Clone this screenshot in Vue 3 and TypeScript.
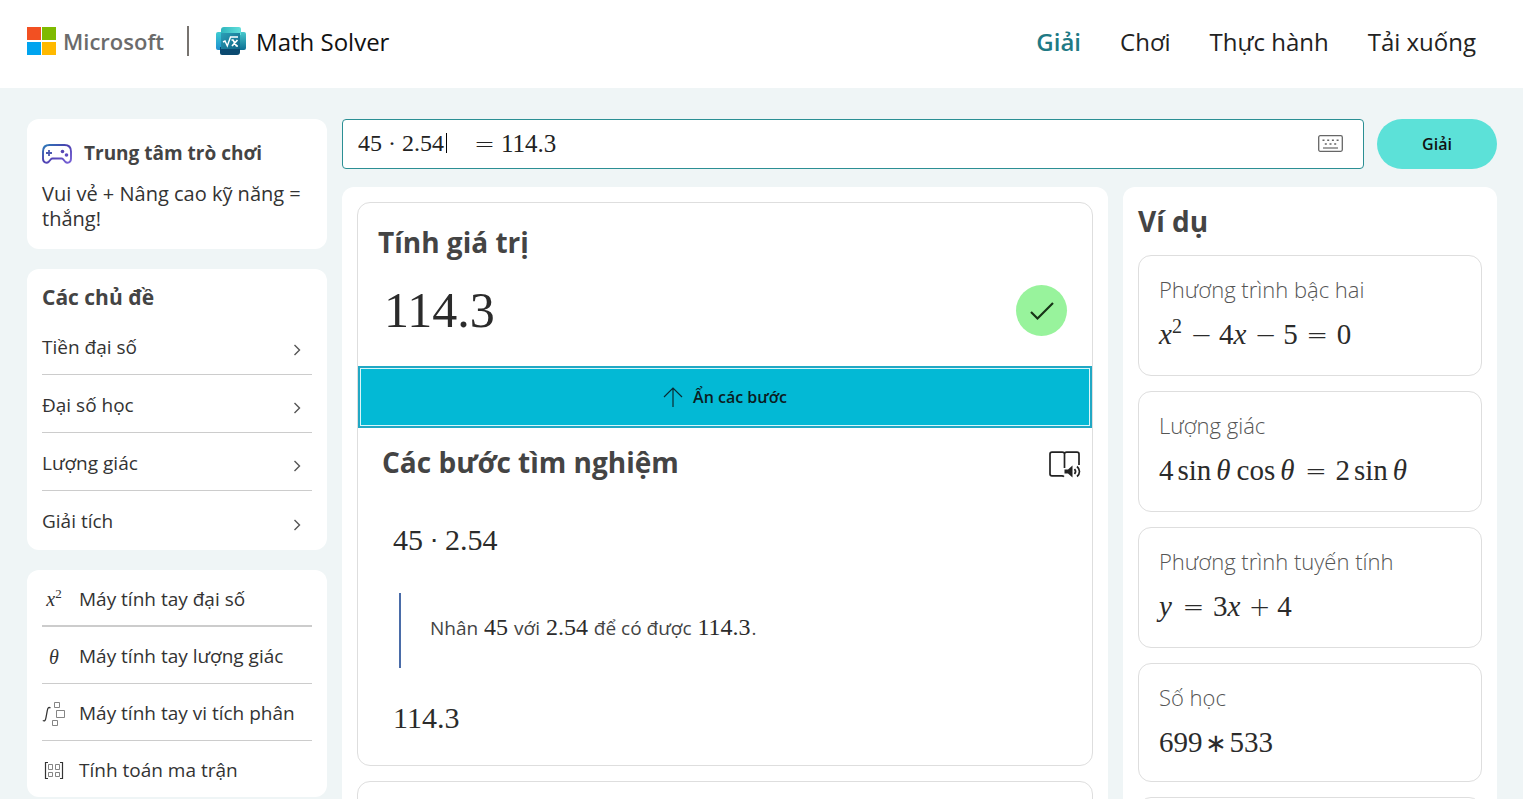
<script setup lang="ts">
import { ref } from 'vue'

type Kind = 'num' | 'var' | 'bin' | 'rel' | 'fn' | 'star'
interface Token { text: string; kind: Kind; sup?: string }
interface Example { title: string; tokens: Token[] }

const navLinks = [
  { label: 'Giải', active: true },
  { label: 'Chơi', active: false },
  { label: 'Thực hành', active: false },
  { label: 'Tải xuống', active: false },
]

const topics = ['Tiền đại số', 'Đại số học', 'Lượng giác', 'Giải tích']

const calculators = [
  { label: 'Máy tính tay đại số', icon: 'power' },
  { label: 'Máy tính tay lượng giác', icon: 'theta' },
  { label: 'Máy tính tay vi tích phân', icon: 'integral' },
  { label: 'Tính toán ma trận', icon: 'matrix' },
]

const n = (text: string): Token => ({ text, kind: 'num' })
const v = (text: string, sup?: string): Token => ({ text, kind: 'var', sup })
const bin = (text: string): Token => ({ text, kind: 'bin' })
const rel = (text: string): Token => ({ text, kind: 'rel' })
const fn = (text: string): Token => ({ text, kind: 'fn' })
const star = (text: string): Token => ({ text, kind: 'star' })

const examples: Example[] = [
  { title: 'Phương trình bậc hai', tokens: [v('x', '2'), bin('−'), n('4'), v('x'), bin('−'), n('5'), rel('='), n('0')] },
  { title: 'Lượng giác', tokens: [n('4'), fn('sin'), v('θ'), fn('cos'), v('θ'), rel('='), n('2'), fn('sin'), v('θ')] },
  { title: 'Phương trình tuyến tính', tokens: [v('y'), rel('='), n('3'), v('x'), bin('+'), n('4')] },
  { title: 'Số học', tokens: [n('699'), star('∗'), n('533')] },
]

const isNumeric = (example: Example) => example.tokens.every((token) => token.kind !== 'var')

const expression = ref('45 · 2.54')
const stepsOpen = ref(true)
</script>

<template>
  <div class="page">
    <header class="header">
      <div class="brand">
        <a class="ms" href="#">
          <svg class="ms-logo" viewBox="0 0 29 28" aria-hidden="true">
            <rect width="14" height="13" fill="#f25022" />
            <rect x="15" width="14" height="13" fill="#7fba00" />
            <rect y="15" width="14" height="13" fill="#00a4ef" />
            <rect x="15" y="15" width="14" height="13" fill="#ffb900" />
          </svg>
          <span>Microsoft</span>
        </a>
        <span class="divider"></span>
        <a class="product" href="#">
          <svg class="product-logo" viewBox="0 0 30 28" aria-hidden="true">
            <defs>
              <linearGradient id="lg-top" x1="0" y1="0" x2="1" y2="0">
                <stop offset="0" stop-color="#2fb5bd" />
                <stop offset="1" stop-color="#62e0dc" />
              </linearGradient>
              <linearGradient id="lg-side" x1="0" y1="0" x2="0" y2="1">
                <stop offset="0" stop-color="#3fcdd2" />
                <stop offset="1" stop-color="#1d8fd0" />
              </linearGradient>
              <linearGradient id="lg-right" x1="0" y1="0" x2="0" y2="1">
                <stop offset="0" stop-color="#49c9cd" />
                <stop offset="1" stop-color="#0c6f93" />
              </linearGradient>
              <linearGradient id="lg-mid" x1="0" y1="0" x2="1" y2="1">
                <stop offset="0" stop-color="#2b9fb6" />
                <stop offset="1" stop-color="#0f6487" />
              </linearGradient>
            </defs>
            <rect x="0" y="5" width="15" height="18" rx="2" fill="url(#lg-side)" />
            <rect x="15" y="5" width="15" height="18" rx="2" fill="url(#lg-right)" />
            <path d="M8 0h15a2 2 0 0 1 2 2v6H5V3a3 3 0 0 1 3-3z" fill="url(#lg-top)" />
            <path d="M4 20h20v5a3 3 0 0 1-3 3H6a2 2 0 0 1-2-2v-3z" fill="#0b4a70" />
            <rect x="5" y="6" width="19" height="16" fill="url(#lg-mid)" />
            <path d="M7 15l2-1 2.300 5 3.200-9h7.500" fill="none" stroke="#fff" stroke-width="1.400" />
            <path d="M15.500 13h1.500l3.500 6H22M21.500 13L16 19" fill="none" stroke="#fff" stroke-width="1.700" />
          </svg>
          <span>Math Solver</span>
        </a>
      </div>
      <nav class="nav">
        <a v-for="link in navLinks" :key="link.label" href="#" :class="{ active: link.active }">{{ link.label }}</a>
      </nav>
    </header>

    <div class="body">
      <aside class="sidebar">
        <a class="card game" href="#">
          <span class="game-head">
            <svg class="game-icon" viewBox="0 0 30 20" aria-hidden="true">
              <defs>
                <linearGradient id="pad" x1="0" y1="0" x2="1" y2="1">
                  <stop offset="0" stop-color="#2b7cb8" />
                  <stop offset="0.450" stop-color="#4a3fae" />
                  <stop offset="1" stop-color="#7a63d8" />
                </linearGradient>
              </defs>
              <path d="M7.500 1h15C26.500 1 29 3.500 29 7.500v7c0 4-3.500 5.500-6 3l-2-2.300c-.4-.5-.8-.7-1.500-.7h-9c-.7 0-1.100.2-1.500.7l-2 2.300c-2.500 2.500-6 1-6-3v-7C1 3.500 3.500 1 7.500 1z" fill="none" stroke="url(#pad)" stroke-width="1.900" stroke-linejoin="round" />
              <path d="M4 9h6M7 6v6" stroke="#4a58b0" stroke-width="1.800" />
              <circle cx="20.500" cy="7.500" r="1.800" fill="#5546b2" />
              <circle cx="24.500" cy="11" r="1.800" fill="#5d4cc0" />
            </svg>
            <strong>Trung tâm trò chơi</strong>
          </span>
          <span class="game-text">Vui vẻ + Nâng cao kỹ năng = thắng!</span>
        </a>

        <section class="card topics">
          <h2>Các chủ đề</h2>
          <ul>
            <li v-for="topic in topics" :key="topic">
              <a href="#">
                <span>{{ topic }}</span>
                <svg viewBox="0 0 8 12" aria-hidden="true"><path d="M1.500 1l5 5-5 5" fill="none" stroke="#555" stroke-width="1.400" /></svg>
              </a>
            </li>
          </ul>
        </section>

        <section class="card calcs">
          <ul>
            <li v-for="calc in calculators" :key="calc.label">
              <a href="#">
                <span class="calc-icon">
                  <span v-if="calc.icon === 'power'" class="glyph"><i>x</i><sup>2</sup></span>
                  <span v-else-if="calc.icon === 'theta'" class="glyph"><i>θ</i></span>
                  <svg v-else-if="calc.icon === 'integral'" viewBox="0 0 24 26" fill="none" stroke="#777" aria-hidden="true">
                    <path d="M8.500 7c-1.800-1.200-2.700-.3-3.200 2.500L4 16.500c-.5 3-1.400 4-3.200 3" stroke="#333" stroke-width="1.300" />
                    <path d="M12.500 1.500h5v5h-5zM14.500 9.500h8v7h-8zM10.500 19.500h5v5h-5z" stroke-width=".9" />
                  </svg>
                  <svg v-else viewBox="0 0 24 26" fill="none" stroke="#777" aria-hidden="true">
                    <path d="M6 4.500H3.500v16H6M18 4.500h2.500v16H18" stroke="#333" stroke-width="1.200" />
                    <path d="M6.500 6.500h4v5h-4zM13.500 6.500h4v5h-4zM6.500 14.500h4v4h-4zM13.500 14.500h4v4h-4z" stroke-width=".9" />
                  </svg>
                </span>
                <span>{{ calc.label }}</span>
              </a>
            </li>
          </ul>
        </section>
      </aside>

      <main class="content">
        <form class="search" @submit.prevent>
          <div class="field">
            <input v-model="expression" type="text" aria-label="Biểu thức" />
            <span class="caret"></span>
            <output><span class="equals">=</span>114.3</output>
            <button type="button" class="keyboard" aria-label="Bàn phím">
              <svg viewBox="0 0 25 17" aria-hidden="true">
                <rect x="0.700" y="0.700" width="23.600" height="15.600" rx="1.500" fill="none" stroke="#666" stroke-width="1.300" />
                <path d="M4.500 5.200h2M9.200 5.200h2M13.900 5.200h2M18.600 5.200h2M6.800 9h2M11.500 9h2M16.200 9h2" stroke="#666" stroke-width="1.600" />
                <path d="M5 13h15" stroke="#666" stroke-width="1.200" />
              </svg>
            </button>
          </div>
          <button type="submit" class="solve">Giải</button>
        </form>

        <div class="columns">
          <div class="panel results">
            <article class="box result">
              <div class="summary">
                <h2>Tính giá trị</h2>
                <div class="answer">
                  <span class="math">114.3</span>
                  <span class="check">
                    <svg viewBox="0 0 26 20" aria-hidden="true"><path d="M2 11l6.500 6.500L24 2" fill="none" stroke="#173417" stroke-width="2.200" /></svg>
                  </span>
                </div>
              </div>
              <button type="button" class="toggle" @click="stepsOpen = !stepsOpen">
                <svg viewBox="0 0 20 20" aria-hidden="true"><path d="M10 20V1M1 10l9-9 9 9" fill="none" stroke="#0b2b33" stroke-width="1.200" /></svg>
                <span>Ẩn các bước</span>
              </button>
              <div v-if="stepsOpen" class="steps">
                <div class="steps-head">
                  <h2>Các bước tìm nghiệm</h2>
                  <button type="button" class="reader" aria-label="Trình đọc">
                    <svg viewBox="0 0 32 27" aria-hidden="true">
                      <path d="M15.500 3c0-1-1-1.800-2.200-1.800H3C1.800 1.200 1 2 1 3v20c0 1 .8 1.800 2 1.800h10c1 0 1.500.3 2 .8M15.500 17V3c0-1 1-1.800 2.200-1.800H28c1.200 0 2 .8 2 1.800v11" fill="none" stroke="#222" stroke-width="1.700" />
                      <path d="M15.500 18.500h3.500l4.500-4v12l-4.500-4h-3.500z" fill="#222" />
                      <path d="M25.500 18c1.300 1.500 1.300 3.500 0 5M28 15.500c3.300 2.800 3.300 7.200 0 10" fill="none" stroke="#222" stroke-width="1.700" />
                    </svg>
                  </button>
                </div>
                <p class="math expr">45<span class="bin dot">⋅</span>2.54</p>
                <p class="explain">Nhân <span class="math">45</span> với <span class="math">2.54</span> để có được <span class="math">114.3</span>.</p>
                <p class="math expr">114.3</p>
              </div>
            </article>
            <article class="box next"></article>
          </div>

          <aside class="panel examples">
            <h2>Ví dụ</h2>
            <a v-for="example in examples" :key="example.title" class="box example" :class="{ numeric: isNumeric(example) }" href="#">
              <span class="example-title">{{ example.title }}</span>
              <span class="math">
                <span v-for="(token, i) in example.tokens" :key="i" :class="token.kind">{{ token.text }}<sup v-if="token.sup">{{ token.sup }}</sup></span>
              </span>
            </a>
            <div class="box example"></div>
          </aside>
        </div>
      </main>
    </div>
  </div>
</template>

<style>
body {
  margin: 0;
  background: #eff5f6;
}
</style>

<style scoped>
.page {
  height: 100vh;
  overflow: hidden;
  background: #eff5f6;
  color: #333;
  font-family: "Open Sans", "Noto Sans", sans-serif;
  font-size: 19px;
  line-height: 25px;
}
.page * {
  box-sizing: border-box;
}
a {
  color: inherit;
  text-decoration: none;
}
button {
  padding: 0;
  border: 0;
  background: none;
  font-family: inherit;
  cursor: pointer;
}
h2,
p,
ul {
  margin: 0;
  padding: 0;
}
ul {
  list-style: none;
}
svg {
  display: block;
}
h2 {
  color: #444;
  font-size: 28px;
  line-height: 40px;
  font-weight: 700;
}
.math {
  color: #2b2b2b;
  font-family: "Liberation Serif", serif;
}

.header {
  display: flex;
  align-items: center;
  justify-content: space-between;
  height: 88px;
  padding: 0 47px 6px 27px;
  background: #fff;
}
.brand,
.ms,
.product,
.nav {
  display: flex;
  align-items: center;
}
.ms {
  gap: 7px;
  color: #6b6b6b;
  font-size: 22px;
  font-weight: 600;
}
.ms-logo {
  width: 29px;
  height: 28px;
}
.divider {
  width: 2px;
  height: 30px;
  margin: 0 27px 0 23px;
  background: #77736f;
}
.product {
  gap: 10px;
  color: #111;
  font-size: 24px;
}
.product-logo {
  width: 30px;
  height: 28px;
}
.nav {
  gap: 39px;
  color: #222;
  font-size: 24px;
}
.nav .active {
  color: #1f7a85;
  font-weight: 600;
}

.body {
  display: grid;
  grid-template-columns: 300px minmax(0, 1fr);
  gap: 15px;
  align-items: start;
  padding: 31px 26px 0 27px;
}
.sidebar {
  display: flex;
  flex-direction: column;
  gap: 20px;
}
.card {
  padding: 0 15px;
  border-radius: 12px;
  background: #fff;
}
.game {
  display: block;
  padding: 22px 15px 18px;
}
.game-head {
  display: flex;
  align-items: center;
  gap: 12px;
  margin-bottom: 15px;
  color: #444;
}
.game-icon {
  width: 30px;
  height: 20px;
}
.game-text {
  display: block;
  font-size: 20px;
}
.topics {
  padding-bottom: 1px;
}
.topics h2 {
  padding-top: 8px;
  font-size: 21px;
}
.topics li {
  height: 58px;
  border-bottom: 1px solid #ccc;
}
.topics li:last-child,
.calcs li:last-child {
  border-bottom: 0;
}
.topics a {
  display: flex;
  align-items: center;
  justify-content: space-between;
  height: 100%;
  padding: 3px 11px 0 0;
}
.topics svg {
  width: 8px;
  height: 12px;
  margin-top: 6px;
}
.calcs li {
  height: 57px;
  border-bottom: 1px solid #ccc;
}
.calcs li:first-child {
  border-bottom-width: 2px;
}
.calcs li:last-child {
  height: 56px;
}
.calcs a {
  display: flex;
  align-items: center;
  gap: 13px;
  height: 100%;
  padding-top: 3px;
}
.calc-icon {
  display: flex;
  justify-content: center;
  width: 24px;
}
.calc-icon svg {
  width: 24px;
  height: 26px;
}
.glyph {
  font-family: "Liberation Serif", serif;
  font-size: 20px;
  line-height: 24px;
}
.glyph sup {
  font-size: 13px;
  line-height: 0;
}

.search {
  display: flex;
  gap: 13px;
}
.field {
  display: flex;
  flex: 1;
  align-items: center;
  height: 50px;
  padding: 0 20px 2px 15px;
  border: 1px solid #2b8f94;
  border-radius: 4px;
  background: #fff;
  color: #222;
  font-family: "Liberation Serif", serif;
  font-size: 25px;
}
.field input {
  width: 88px;
  padding: 0;
  border: 0;
  outline: 0;
  background: none;
  color: inherit;
  font: inherit;
  font-size: 24px;
}
.caret {
  width: 1px;
  height: 20px;
  background: #000;
}
.field output {
  flex: 1;
  margin-left: 27px;
}
.equals {
  display: inline-block;
  width: 27px;
  font-family: "DejaVu Sans Light", "DejaVu Sans", sans-serif;
  font-size: 25px;
  font-weight: 200;
}
.keyboard svg {
  width: 25px;
  height: 17px;
}
.solve {
  width: 120px;
  height: 50px;
  border-radius: 25px;
  background: #5ce1d8;
  color: #111;
  font-size: 16px;
  font-weight: 600;
}

.columns {
  display: grid;
  grid-template-columns: minmax(0, 1fr) 374px;
  gap: 15px;
  align-items: start;
  margin-top: 18px;
}
.panel {
  display: flex;
  flex-direction: column;
  gap: 15px;
  padding: 15px;
  border-radius: 12px;
  background: #fff;
}
.box {
  border: 1px solid #dedede;
  border-radius: 13px;
  background: #fff;
}
.summary {
  padding: 19px 25px 30px 20px;
}
.answer {
  display: flex;
  align-items: center;
  justify-content: space-between;
  margin-top: 23px;
  padding-left: 6px;
}
.answer .math {
  font-size: 50px;
  line-height: 51px;
}
.check {
  display: grid;
  place-items: center;
  width: 51px;
  height: 51px;
  border-radius: 50%;
  background: #98f39c;
}
.check svg {
  width: 26px;
  height: 20px;
}
.toggle {
  display: flex;
  align-items: center;
  justify-content: center;
  gap: 10px;
  width: 100%;
  height: 62px;
  border: 2px solid #21a8c4;
  outline: 1px solid #d9f6fa;
  outline-offset: -3px;
  background: #03b9d5;
  color: #0b1c22;
  font-size: 16px;
  font-weight: 600;
}
.toggle svg {
  width: 20px;
  height: 20px;
}
.steps {
  padding: 14px 11px 27px 24px;
}
.steps-head {
  display: flex;
  align-items: center;
  justify-content: space-between;
}
.reader svg {
  width: 32px;
  height: 27px;
  margin-top: 5px;
}
.expr {
  margin: 38px 0 0 11px;
  font-size: 30px;
  line-height: 40px;
}
.explain {
  margin: 33px 0 0 17px;
  padding: 17px 0 23px 29px;
  border-left: 2px solid #4a6ca8;
  color: #444;
  line-height: 34px;
}
.explain .math {
  margin: 0 1px;
  font-size: 24px;
}
.explain + .expr {
  margin-top: 30px;
}
.next {
  height: 200px;
}

.examples h2 {
  margin-top: -1px;
  margin-bottom: -1px;
}
.example {
  display: flex;
  flex-direction: column;
  gap: 8px;
  min-height: 121px;
  padding: 18px 20px 0;
}
.example.numeric {
  min-height: 119px;
}
.example-title {
  color: #555;
  font-size: 22px;
  line-height: 30px;
  font-weight: 300;
}
.example .math {
  font-size: 29px;
  line-height: 44px;
}
.math sup {
  font-size: 20px;
  line-height: 0;
}
.var {
  margin-right: 2px;
  font-style: italic;
}
.var sup {
  font-style: normal;
}
.bin,
.rel,
.star {
  display: inline-block;
  width: 35px;
  font-family: "DejaVu Sans Light", "DejaVu Sans", sans-serif;
  font-size: 26px;
  font-weight: 200;
  line-height: 30px;
  text-align: center;
}
.rel {
  width: 39px;
}
.star {
  width: 27px;
  font-family: "DejaVu Sans", sans-serif;
  font-weight: 400;
}
.dot {
  width: 22px;
}
.fn {
  margin: 0 5px 0 4px;
}
</style>
